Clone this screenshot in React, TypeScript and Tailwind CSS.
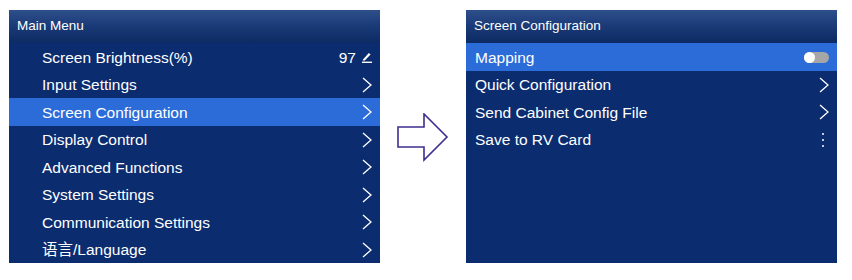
import React from 'react';

type Row = { label: string; right: 'chevron' | 'value' | 'toggle' | 'dots'; active?: boolean };

const mainRows: Row[] = [
  { label: 'Screen Brightness(%)', right: 'value' },
  { label: 'Input Settings', right: 'chevron' },
  { label: 'Screen Configuration', right: 'chevron', active: true },
  { label: 'Display Control', right: 'chevron' },
  { label: 'Advanced Functions', right: 'chevron' },
  { label: 'System Settings', right: 'chevron' },
  { label: 'Communication Settings', right: 'chevron' },
  { label: '语言/Language', right: 'chevron' },
];

const configRows: Row[] = [
  { label: 'Mapping', right: 'toggle', active: true },
  { label: 'Quick Configuration', right: 'chevron' },
  { label: 'Send Cabinet Config File', right: 'chevron' },
  { label: 'Save to RV Card', right: 'dots' },
];

const Chevron = () => (
  <svg width="10" height="16" viewBox="0 0 10 16" fill="none" stroke="white" strokeWidth="1.3">
    <path d="M1 1 L9 8 L1 15" />
  </svg>
);

const RightItem = ({ kind }: { kind: Row['right'] }) => {
  if (kind === 'chevron') return <Chevron />;
  if (kind === 'value')
    return (
      <div className="flex items-center gap-[6px]">
        <span>97</span>
        <svg width="10" height="11" viewBox="0 0 10 11" fill="white">
          <path d="M1 7.4 L6.8 1 L8.6 2.4 L2.8 8.4 L0.8 8.6 Z" />
          <rect x="0" y="9.6" width="10" height="1.4" />
        </svg>
      </div>
    );
  if (kind === 'toggle')
    return (
      <div className="flex h-[11px] w-[25px] items-center rounded-full bg-[#a6a6a6]">
        <div className="h-[11px] w-[11px] rounded-full bg-white" />
      </div>
    );
  return (
    <div className="flex flex-col items-center gap-[3.5px] pr-[5px]">
      <div className="h-[2.5px] w-[2.5px] rounded-full bg-white" />
      <div className="h-[2.5px] w-[2.5px] rounded-full bg-white" />
      <div className="h-[2.5px] w-[2.5px] rounded-full bg-white" />
    </div>
  );
};

const Panel = ({ title, rows, indent }: { title: string; rows: Row[]; indent: string }) => (
  <div className="flex h-[253px] w-[371px] flex-col bg-[#0b2c6f]">
    <div className="flex h-[33px] items-center bg-gradient-to-b from-[#2d4f8a] via-[#1a3a77] to-[#0c2a63] pl-[8px] text-[13.5px] text-white">
      {title}
    </div>
    {rows.map((r) => (
      <div
        key={r.label}
        className={`flex h-[27.5px] items-center justify-between pr-[8px] pt-[1px] text-[15.5px] text-white ${indent} ${
          r.active ? 'bg-[#2b6cd8]' : ''
        }`}
      >
        <span>{r.label}</span>
        <RightItem kind={r.right} />
      </div>
    ))}
  </div>
);

export default function App() {
  return (
    <div
      className="flex h-[280px] w-[852px] items-start bg-white pl-[9px] pt-[10px]"
      style={{ fontFamily: '"Liberation Sans", Arial, "Noto Sans CJK SC", sans-serif' }}
    >
      <Panel title="Main Menu" rows={mainRows} indent="pl-[33px]" />
      <div className="flex h-[253px] w-[86px] items-center justify-center">
        <svg width="52" height="50" viewBox="0 0 52 50" fill="none" stroke="#3b2f90" strokeWidth="1.6" className="mt-[2px]">
          <path d="M1 14 L27 14 L27 1 L50 24 L27 47 L27 34 L1 34 Z" />
        </svg>
      </div>
      <Panel title="Screen Configuration" rows={configRows} indent="pl-[9px]" />
    </div>
  );
}
